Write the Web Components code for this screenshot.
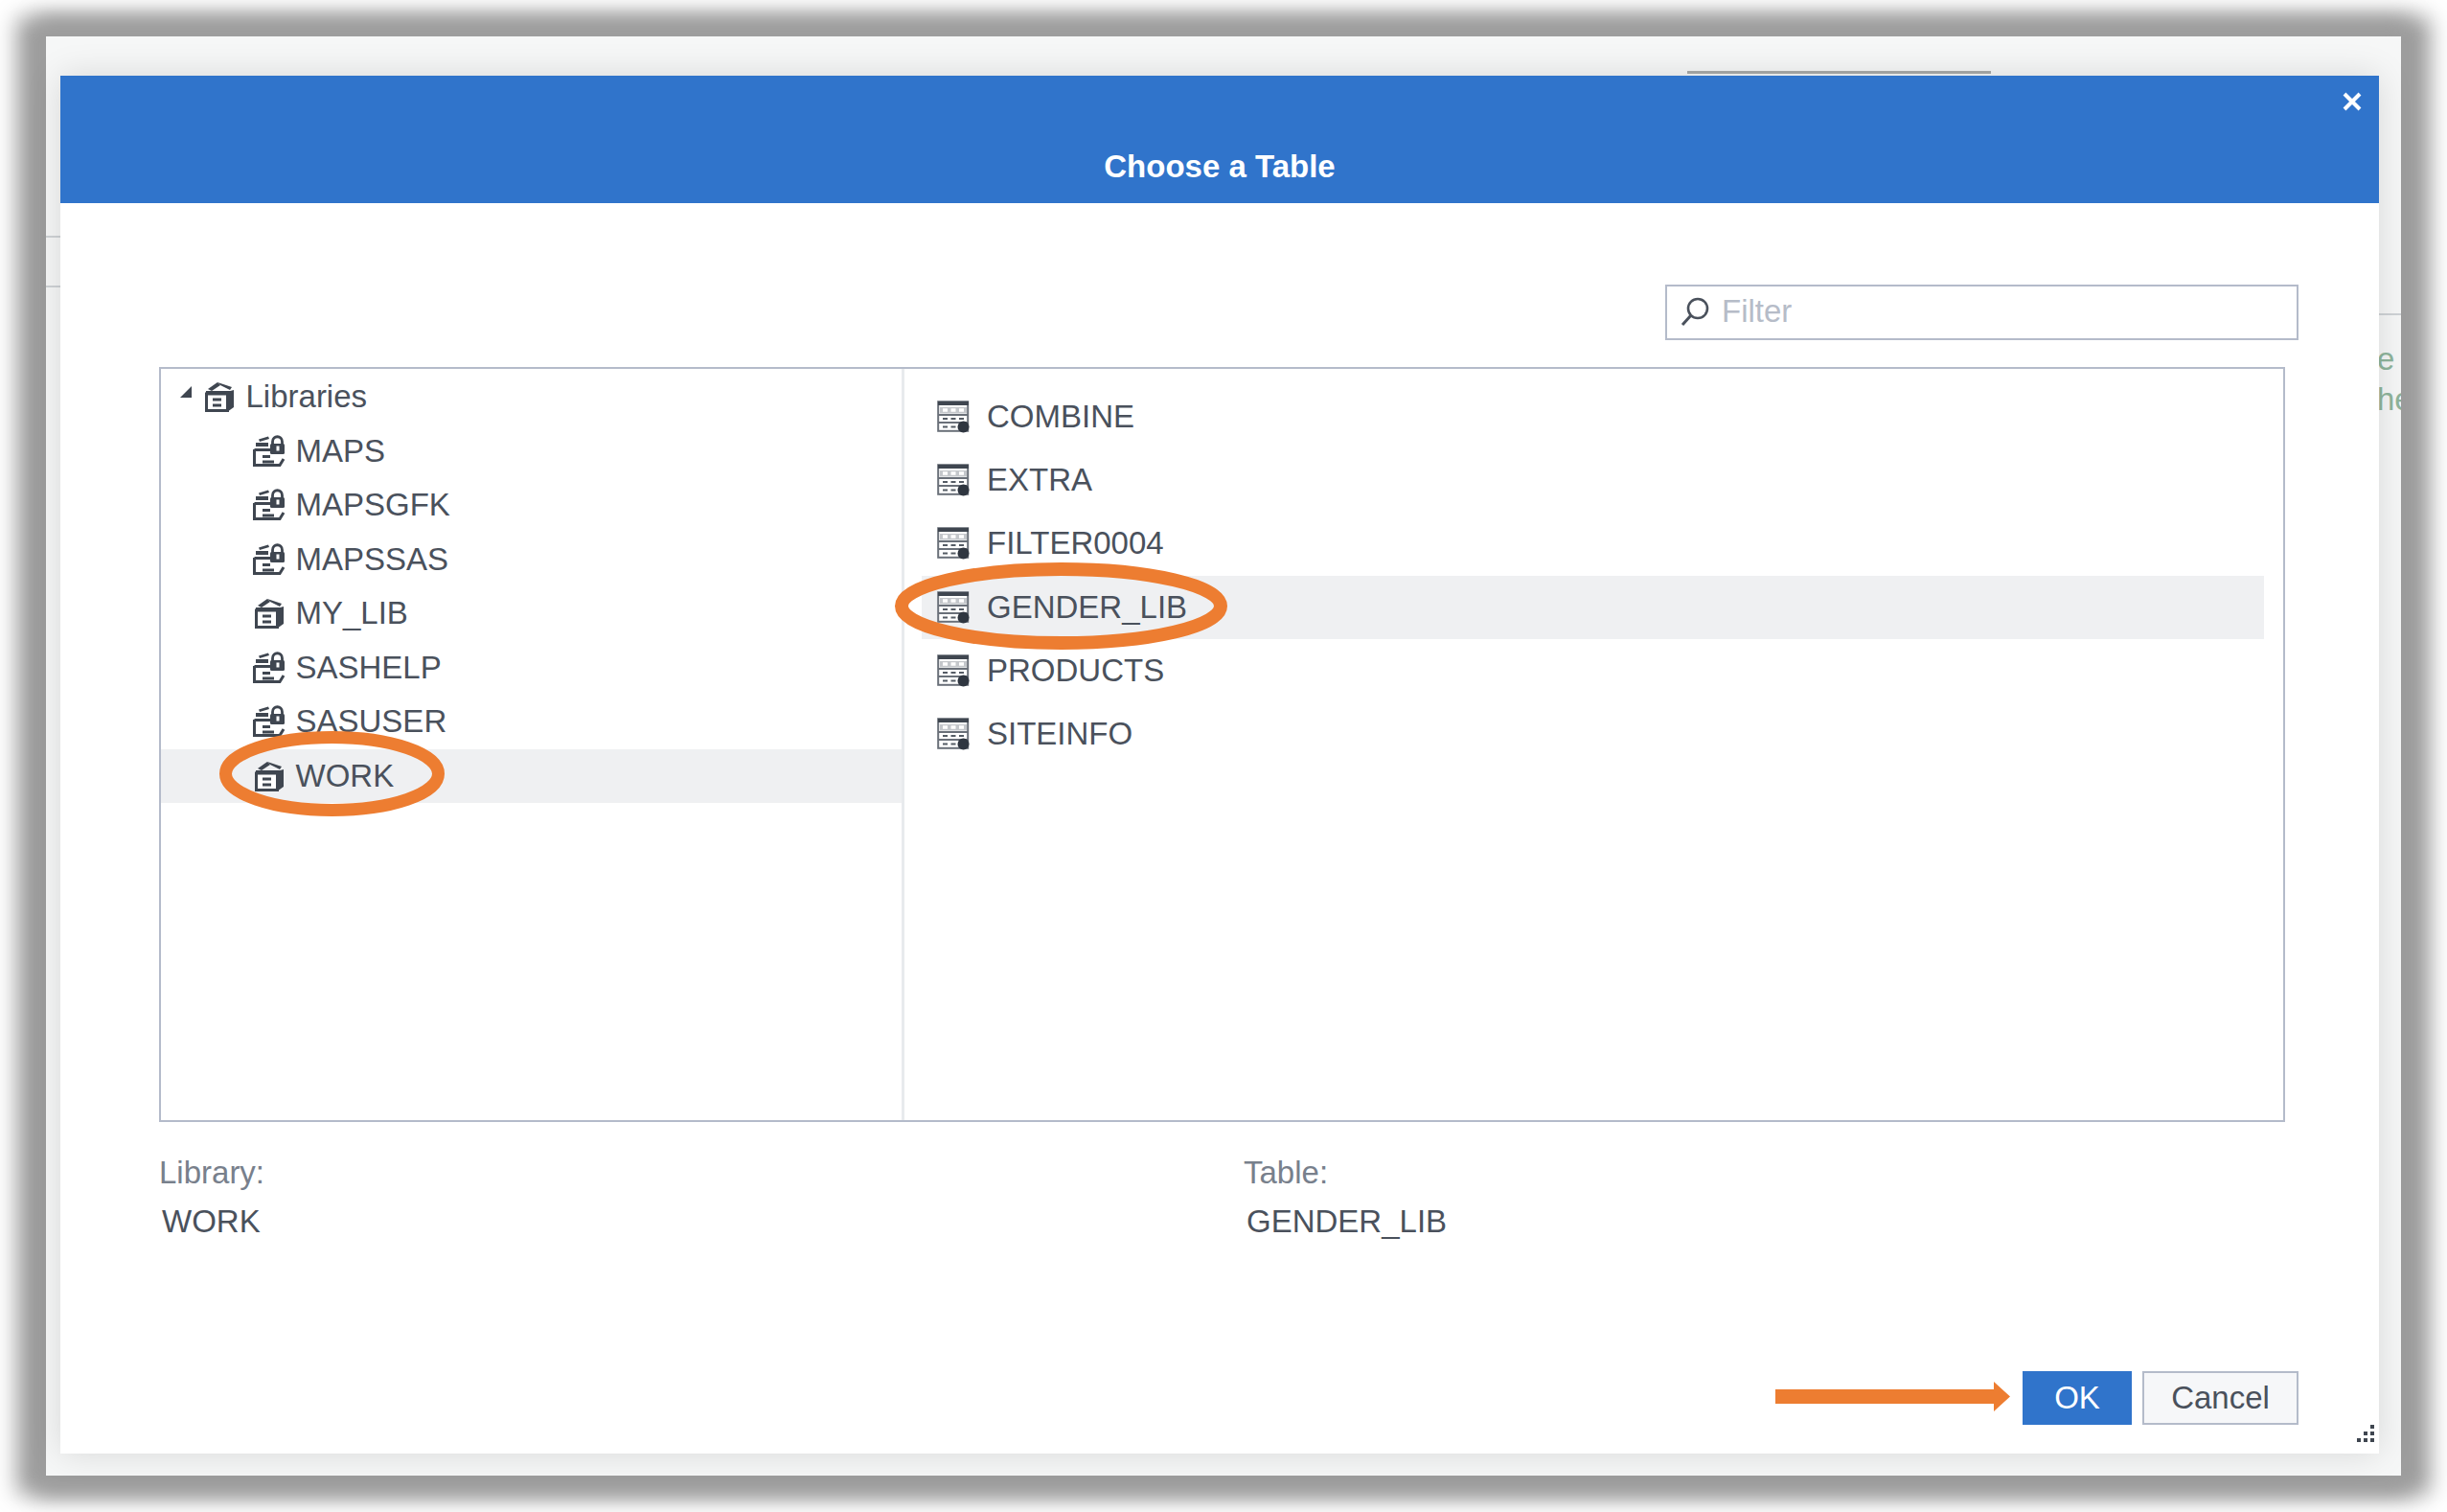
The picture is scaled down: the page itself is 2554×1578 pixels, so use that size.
<!DOCTYPE html>
<html>
<head>
<meta charset="utf-8">
<title>Choose a Table</title>
<style>
  html, body { margin: 0; background: #fff; }
  body { width: 2554px; height: 1578px; overflow: hidden; font-family: "Liberation Sans", Arial, sans-serif; }
</style>
</head>
<body>
<app-window>
  <table-dialog heading="Choose a Table"></table-dialog>
</app-window>

<template id="lib-icon-tpl">
  <svg width="34" height="34" viewBox="0 0 34 34">
    <path d="M5 9 L15 2 L18 5 L9 11 Z" fill="#3f4650"/>
    <path d="M15 2 L30 7 L28 10 L18 5 Z" fill="#3f4650"/>
    <path d="M3 11 H31 V14 H3 Z" fill="#3f4650"/>
    <path d="M3.5 14 H25.5 V31.5 H3.5 Z" fill="#fff" stroke="#3f4650" stroke-width="3"/>
    <path d="M25 12 L32 10 V28 L25 33 Z" fill="#3f4650"/>
    <path d="M10 20 H19 M10 26 H19" stroke="#3f4650" stroke-width="3"/>
  </svg>
</template>

<template id="locked-icon-tpl">
  <svg width="34" height="34" viewBox="0 0 34 34">
    <path d="M6 4.5 L16 1.5 L17 4 L7 7 Z" fill="#3f4650"/>
    <path d="M3 8 H16 V12 H3 Z" fill="#3f4650"/>
    <path d="M1.5 15.5 H18 M1.5 15 V31.5 H28 L32 25" fill="none" stroke="#3f4650" stroke-width="3"/>
    <path d="M10 22.5 H18 M10 28 H22" stroke="#3f4650" stroke-width="2.8"/>
    <path d="M20.5 10 V7 C20.5 0 30.5 0 30.5 7 V10" fill="none" stroke="#3f4650" stroke-width="2.8"/>
    <rect x="18" y="9" width="15" height="11" rx="1.5" fill="#3f4650"/>
    <rect x="24.5" y="11.5" width="3" height="5" fill="#fff"/>
  </svg>
</template>

<template id="table-icon-tpl">
  <svg width="34" height="34" viewBox="0 0 34 34">
    <rect x="1.2" y="1.2" width="31" height="30.6" fill="#fff" stroke="#6a7079" stroke-width="2"/>
    <rect x="1" y="1" width="32" height="4" fill="#3f4650"/>
    <rect x="3" y="7" width="28" height="6.5" fill="#c4c7cb"/>
    <path d="M6 10 H11 M14.5 10 H19.5 M23 10 H28" stroke="#fff" stroke-width="3.4"/>
    <path d="M1 15 H33 M1 23 H33" stroke="#6a7079" stroke-width="2"/>
    <path d="M6 19 H11 M14.5 19 H19.5 M23 19 H28 M6 27.5 H11 M14.5 27.5 H19.5" stroke="#555c65" stroke-width="2.2"/>
    <circle cx="27.5" cy="27.5" r="6" fill="#2f3640"/>
  </svg>
</template>

<script>
// Window with the dimmed page behind the dialog
class AppWindow extends HTMLElement {
  constructor() {
    super();
    this.attachShadow({ mode: 'open' });
    this.shadowRoot.innerHTML = `
      <style>
        :host {
          display: block;
          box-sizing: border-box;
          width: 2458px;
          height: 1502px;
          margin: 38px 0 0 48px;
          padding: 41px 23px 23px 15px;
          background: #f6f7f7;
          box-shadow: -10px 0 22px 20px #9d9d9d, 10px 0 22px 20px #9d9d9d;
          position: relative;
          overflow: visible;
        }
        .clip { position: absolute; inset: 0; overflow: hidden; background: #f6f7f7; }
        .bar { position: absolute; left: 1713px; top: 36px; width: 317px; height: 3px; background: #a9abaa; }
        .line { position: absolute; height: 2px; background: #cfd3d6; }
        .ghost {
          position: absolute; left: 2433px; color: #8fb59c;
          font: 33px/42px "Liberation Sans", sans-serif; white-space: pre;
        }
        ::slotted(*) { position: relative; z-index: 1; }
      </style>
      <div class="clip">
        <div class="bar"></div>
        <div class="line" style="left:0;width:15px;top:208px"></div>
        <div class="line" style="left:0;width:15px;top:260px"></div>
        <div class="line" style="left:2435px;width:23px;top:289px"></div>
        <div class="ghost" style="top:316px"><span>e</span><br><span>he</span></div>
      </div>
      <slot></slot>`;
  }
}

class TreeRow extends HTMLElement {
  constructor() {
    super();
    this.attachShadow({ mode: 'open' });
  }
  connectedCallback() {
    const indent = this.getAttribute('indent') || 0;
    const tpl = document.getElementById(this.getAttribute('icon') + '-icon-tpl');
    this.shadowRoot.innerHTML = `
      <style>
        :host {
          display: flex;
          align-items: center;
          height: var(--row-h, 56.5px);
          padding-left: ${indent}px;
          gap: var(--row-gap, 10.5px);
          color: #4a515c;
          font-size: 33px;
          white-space: nowrap;
        }
        :host([selected]) { background: #eff0f2; }
        svg { flex: none; display: block; }
        .twist {
          width: 0; height: 0; flex: none; margin: 0 1.5px 10px 0;
          border-left: 12px solid transparent; border-bottom: 12px solid #3f4650;
        }
      </style>
      ${this.hasAttribute('twisty') ? '<span class="twist"></span>' : ''}
      <slot></slot>`;
    const label = this.shadowRoot.querySelector('slot');
    this.shadowRoot.insertBefore(tpl.content.cloneNode(true), label);
  }
}

class FilterBox extends HTMLElement {
  constructor() {
    super();
    this.attachShadow({ mode: 'open' });
    this.shadowRoot.innerHTML = `
      <style>
        :host {
          display: flex;
          box-sizing: border-box;
          align-items: center;
          gap: 12px;
          width: 661px;
          height: 58px;
          padding: 0 0 3px 13px;
          border: 2px solid #b4bbca;
          background: #fff;
          color: #b6bcc8;
          font-size: 33px;
        }
        svg { flex: none; }
      </style>
      <svg width="32" height="32" viewBox="0 0 32 32">
        <circle cx="19" cy="13" r="10" fill="none" stroke="#4a515c" stroke-width="2.6"/>
        <path d="M12 20 L3 30" stroke="#4a515c" stroke-width="3"/>
      </svg>
      <span><slot></slot></span>`;
  }
}

class DialogButton extends HTMLElement {
  constructor() {
    super();
    this.attachShadow({ mode: 'open' });
    this.shadowRoot.innerHTML = `
      <style>
        :host {
          display: flex;
          box-sizing: border-box;
          align-items: center;
          justify-content: center;
          height: 56px;
          font-size: 33px;
          border: 2px solid #b4bbca;
          background: #f6f7f9;
          color: #4a515c;
        }
        :host([primary]) { background: #3074cb; border-color: #3074cb; color: #fff; }
      </style>
      <slot></slot>`;
  }
}

class TableDialog extends HTMLElement {
  constructor() {
    super();
    this.attachShadow({ mode: 'open' });
  }
  connectedCallback() {
    const libs = [
      ['MAPS', 'locked'], ['MAPSGFK', 'locked'], ['MAPSSAS', 'locked'], ['MY_LIB', 'lib'],
      ['SASHELP', 'locked'], ['SASUSER', 'locked'], ['WORK', 'lib']
    ];
    const tables = ['COMBINE', 'EXTRA', 'FILTER0004', 'GENDER_LIB', 'PRODUCTS', 'SITEINFO'];
    this.shadowRoot.innerHTML = `
      <style>
        :host {
          display: flex;
          flex-direction: column;
          box-sizing: border-box;
          width: 2420px;
          height: 1438px;
          background: #fff;
          box-shadow: 0 0 34px rgba(0, 0, 0, .13);
          position: relative;
        }
        header {
          flex: none;
          height: 133px;
          box-sizing: border-box;
          padding-top: 73px;
          background: #3074cb;
          color: #fff;
          font-size: 33px;
          line-height: 44px;
          font-weight: bold;
          text-align: center;
        }
        .close { position: absolute; left: 2381px; top: 17px; }
        .body { flex: 1; display: flex; flex-direction: column; padding: 85px 84px 30px 103px; min-height: 0; }
        .filter-row { display: flex; justify-content: flex-end; margin-bottom: 28px; }
        .panes {
          flex: none;
          display: flex;
          box-sizing: border-box;
          width: 2219px;
          height: 788px;
          border: 2px solid #b4bbca;
        }
        .tree { flex: none; width: 773px; box-sizing: border-box; padding-top: 1px; --row-h: 56.5px; }
        .list {
          flex: 1;
          border-left: 3px solid #e8eaed;
          padding: 17px 20px 0 18px;
          --row-h: 66.2px;
          --row-gap: 18px;
        }
        .details { display: flex; margin-top: 34px; color: #4a515c; font-size: 33px; }
        .details > div { flex: none; width: 1132px; }
        .details label { display: block; color: #78808c; line-height: 38px; }
        .details span { display: block; margin: 13px 0 0 3px; line-height: 38px; }
        footer { flex: 1; display: flex; justify-content: flex-end; align-items: flex-end; gap: 11px; }
        footer dialog-button:first-child { width: 114px; }
        footer dialog-button:last-child { width: 163px; }
        .grip { position: absolute; left: 2396px; top: 1408px; }
        .mark { position: absolute; overflow: visible; pointer-events: none; }
      </style>
      <header>${this.getAttribute('heading')}</header>
      <svg class="close" width="22" height="20" viewBox="0 0 22 20">
        <path d="M3 2 L19 18 M19 2 L3 18" stroke="#fff" stroke-width="4"/>
      </svg>
      <div class="body">
        <div class="filter-row"><filter-box>Filter</filter-box></div>
        <div class="panes">
          <div class="tree">
            <tree-row indent="20" icon="lib" twisty>Libraries</tree-row>
            ${libs.map(([name, icon]) => `<tree-row indent="96" icon="${icon}" ${name === 'WORK' ? 'selected' : ''}>${name}</tree-row>`).join('')}
          </div>
          <div class="list">
            ${tables.map(name => `<tree-row indent="16" icon="table" ${name === 'GENDER_LIB' ? 'selected' : ''}>${name}</tree-row>`).join('')}
          </div>
        </div>
        <div class="details">
          <div><label>Library:</label><span>WORK</span></div>
          <div><label>Table:</label><span>GENDER_LIB</span></div>
        </div>
        <footer>
          <dialog-button primary>OK</dialog-button>
          <dialog-button>Cancel</dialog-button>
        </footer>
      </div>
      <svg class="grip" width="20" height="20" viewBox="0 0 20 20" fill="#3f4650">
        <rect x="15" y="0" width="4" height="4"/>
        <rect x="15" y="7" width="4" height="4"/><rect x="8" y="7" width="4" height="4"/>
        <rect x="15" y="14" width="4" height="4"/><rect x="8" y="14" width="4" height="4"/><rect x="1" y="14" width="4" height="4"/>
      </svg>
      <svg class="mark" style="left:166px;top:684px" width="235" height="89" viewBox="0 0 235 89">
        <ellipse cx="117.5" cy="44.5" rx="111" ry="38" fill="none" stroke="#ed7d31" stroke-width="13"/>
      </svg>
      <svg class="mark" style="left:871px;top:508px" width="347" height="91" viewBox="0 0 347 91">
        <ellipse cx="173.5" cy="45.5" rx="166.5" ry="38.5" fill="none" stroke="#ed7d31" stroke-width="14"/>
      </svg>
      <svg class="mark" style="left:1790px;top:1363px" width="245" height="31" viewBox="0 0 245 31">
        <path d="M0 8 H228 V0 L245 15.5 L228 31 V23 H0 Z" fill="#ed7d31"/>
      </svg>`;
  }
}

customElements.define('app-window', AppWindow);
customElements.define('tree-row', TreeRow);
customElements.define('filter-box', FilterBox);
customElements.define('dialog-button', DialogButton);
customElements.define('table-dialog', TableDialog);
</script>
</body>
</html>
